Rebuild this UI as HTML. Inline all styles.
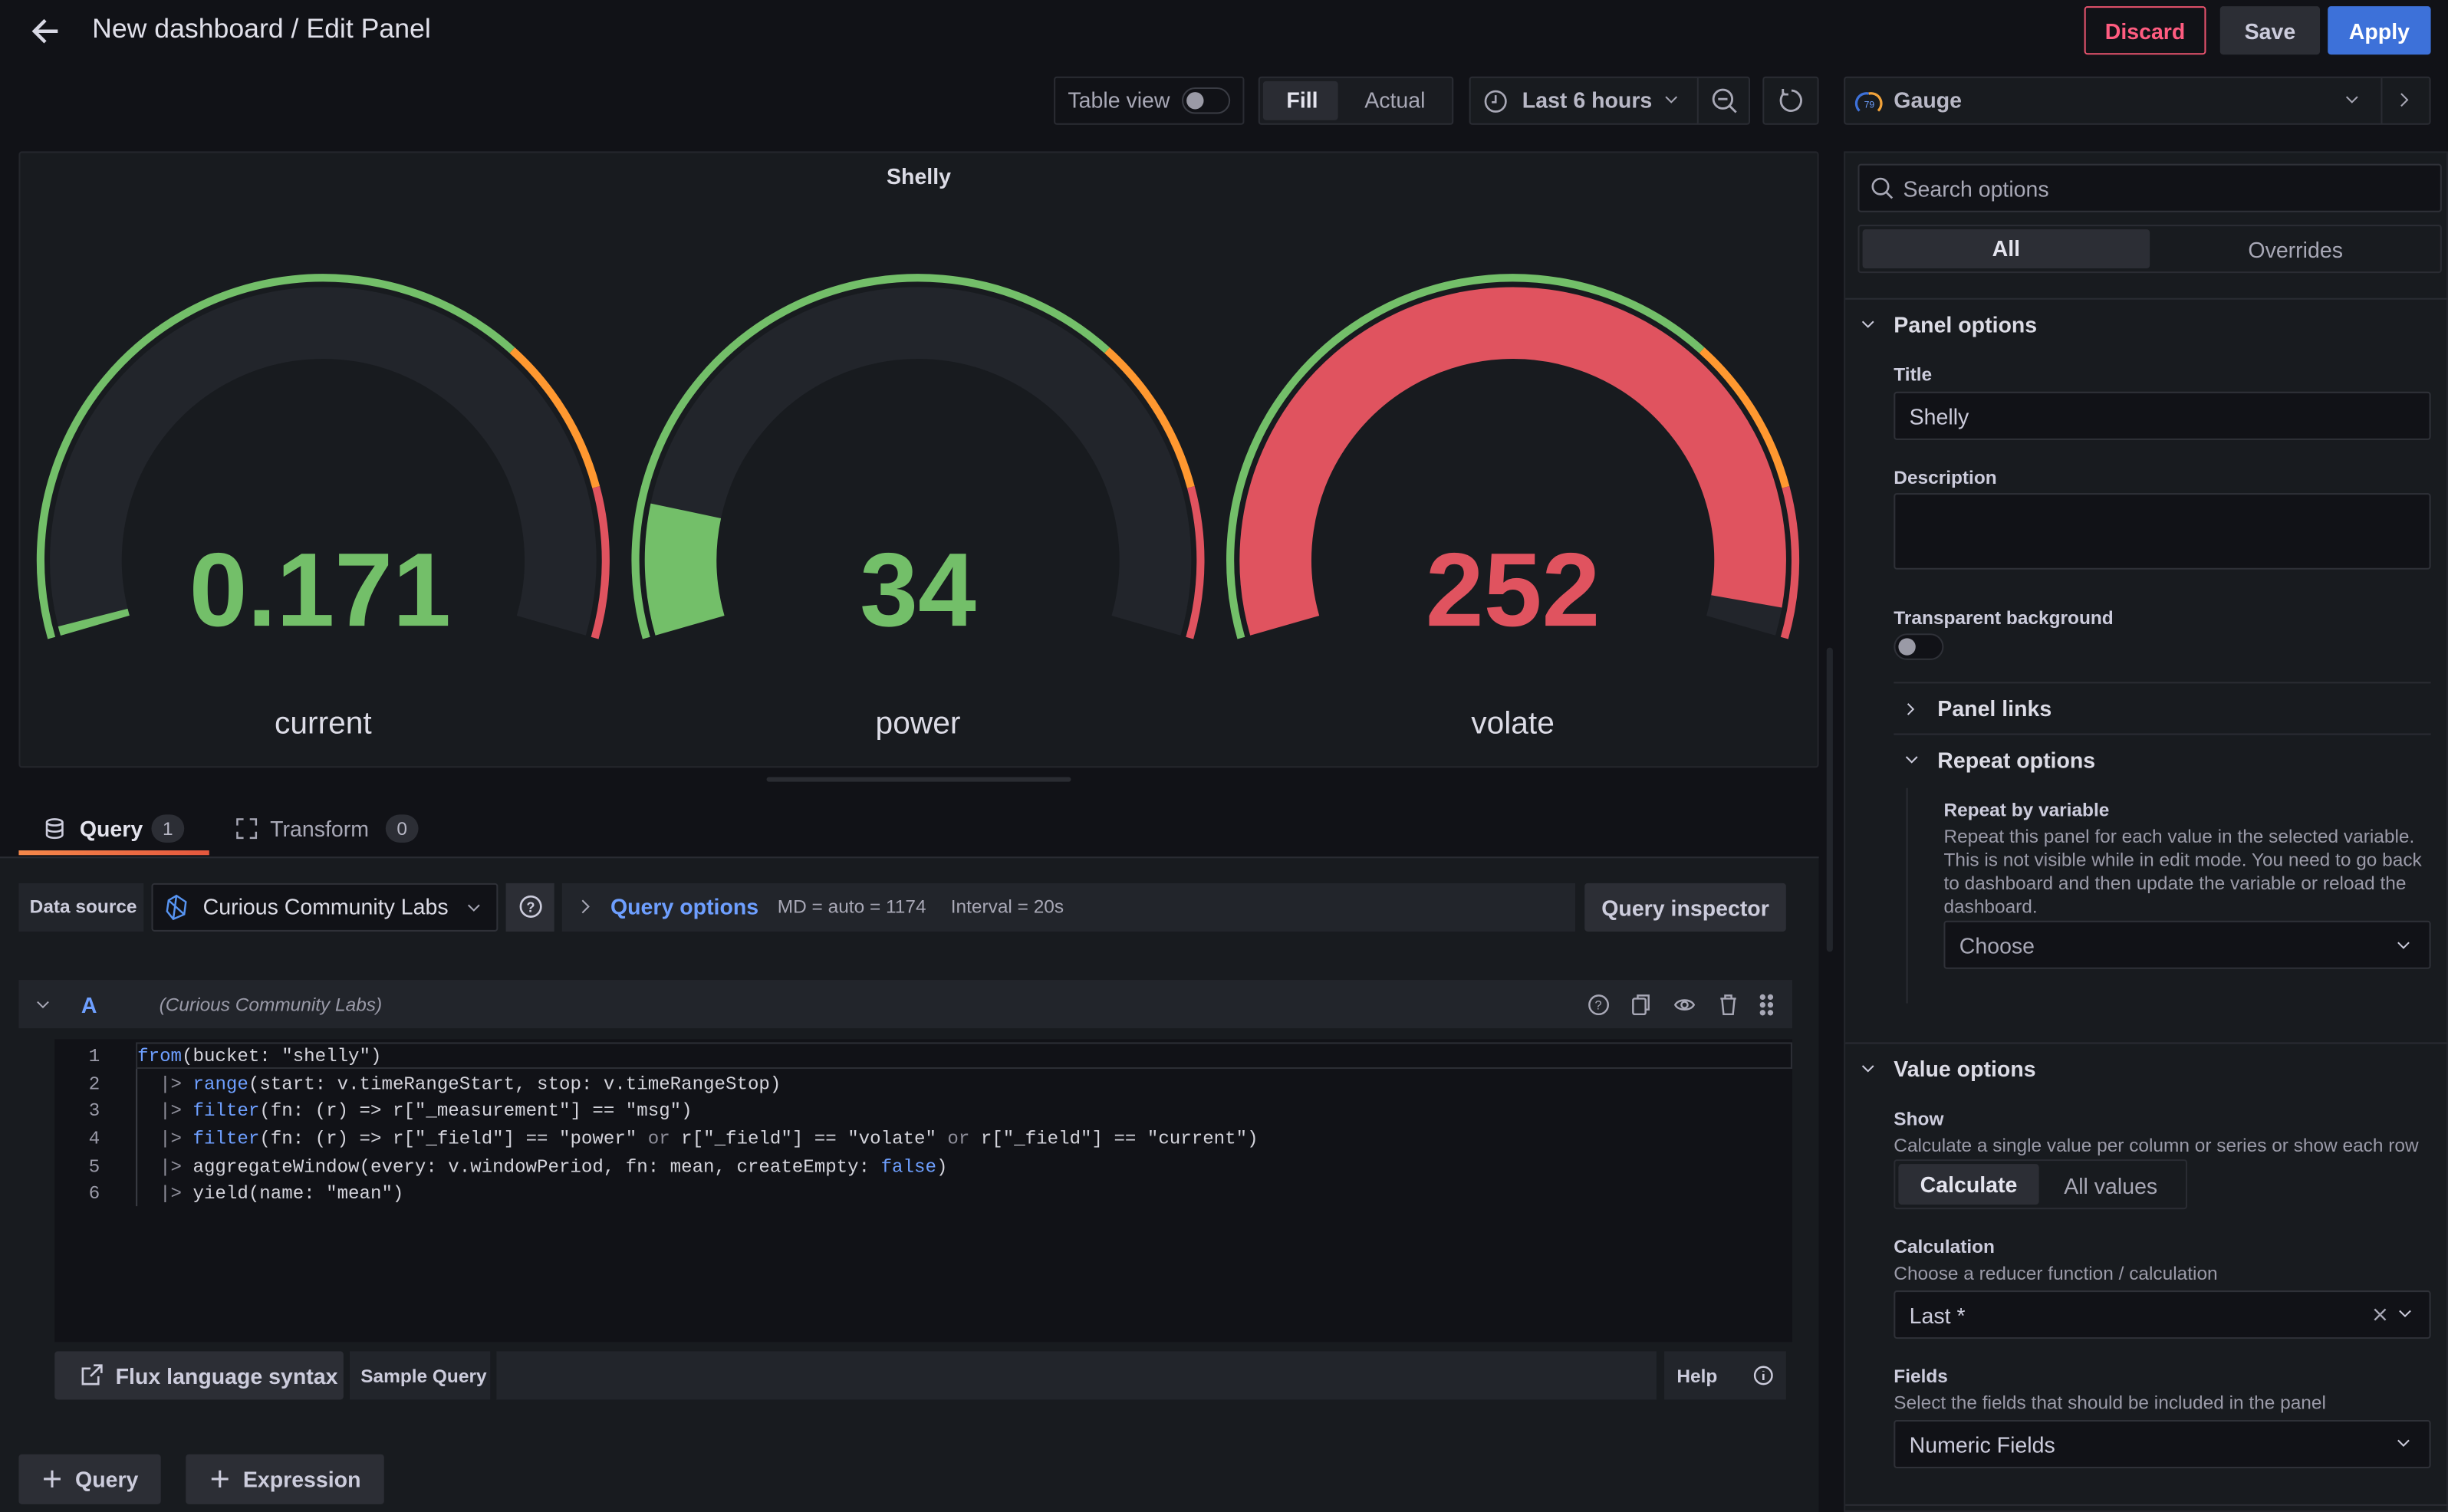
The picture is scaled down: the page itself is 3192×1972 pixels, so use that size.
<!DOCTYPE html>
<html><head><meta charset="utf-8"><style>
*{box-sizing:border-box;margin:0;padding:0}
html,body{width:3192px;height:1972px;overflow:hidden;background:#111217}
#r{position:absolute;left:0;top:0;width:1568px;height:969px;transform:scale(2.0357,2.0351);transform-origin:0 0;background:#111217;font-family:"Liberation Sans",sans-serif;color:#ccccdc;font-size:14px}
.a{position:absolute}
.t{position:absolute;white-space:nowrap;line-height:1}
.box{position:absolute;border:1px solid #2a2c33;border-radius:2px}
.btn{position:absolute;background:#2c2e35;border-radius:2px;display:flex;align-items:center;justify-content:center;font-weight:bold;font-size:14px;color:#ccccdc}
.lbl{position:absolute;font-size:12px;font-weight:bold;color:#ccccdc;white-space:nowrap}
.desc{position:absolute;font-size:12px;color:#9a9aa8;white-space:nowrap}
.inp{position:absolute;background:#111217;border:1px solid #2f3138;border-radius:2px;display:flex;align-items:center;padding-left:9px;font-size:14px}
.hr{position:absolute;height:1px;background:#2a2c33}
.code{position:absolute;left:88px;font-family:"Liberation Mono",monospace;font-size:11.85px;white-space:pre;color:#d4d4dc}
.ln{position:absolute;left:50px;width:14px;text-align:right;font-family:"Liberation Mono",monospace;font-size:12px;color:#9a9aa8}
.k{color:#6e9fff}.g{color:#8e8e9a}
svg{position:absolute;overflow:visible}
</style></head><body><div id="r">

<svg style="left:19px;top:10px" width="20" height="20" viewBox="0 0 20 20"><path d="M18 10H3M10 3L3 10l7 7" stroke="#d8d8e4" stroke-width="2.2" fill="none"/></svg>
<div class="t" style="left:59px;top:10px;font-size:17.5px;color:#e0e0ea">New dashboard / Edit Panel</div>
<div class="a" style="left:1335px;top:4px;width:78px;height:31px;border:1px solid #e8536e;border-radius:2px;color:#ff5c80;font-weight:bold;display:flex;align-items:center;justify-content:center">Discard</div>
<div class="btn" style="left:1422px;top:4px;width:64px;height:31px">Save</div>
<div class="btn" style="left:1491px;top:4px;width:66px;height:31px;background:#3d71d9;color:#fff">Apply</div>

<div class="box" style="left:675px;top:49px;width:122px;height:31px"></div>
<div class="t" style="left:684px;top:57px;color:#a8a8b6">Table view</div>
<div class="a" style="left:757px;top:56px;width:31px;height:17px;border:1px solid #3a3c44;border-radius:9px"></div>
<div class="a" style="left:760px;top:59px;width:11px;height:11px;border-radius:50%;background:#9a9aa6"></div>
<div class="box" style="left:806px;top:49px;width:125px;height:31px;background:#1a1c21"></div>
<div class="a" style="left:809px;top:52px;width:48px;height:25px;background:#2a2c33;border-radius:2px"></div>
<div class="t" style="left:824px;top:57px;font-weight:bold;color:#e4e4ee">Fill</div>
<div class="t" style="left:874px;top:57px;color:#a8a8b6">Actual</div>
<div class="box" style="left:941px;top:49px;width:180px;height:31px;background:#181b1f"></div>
<div class="a" style="left:1087px;top:50px;width:1px;height:29px;background:#2a2c33"></div>
<svg style="left:950px;top:57px" width="16" height="16" viewBox="0 0 16 16"><circle cx="8" cy="8" r="6.5" stroke="#a8a8b6" stroke-width="1.3" fill="none"/><path d="M8 4v4.5H5.5" stroke="#a8a8b6" stroke-width="1.3" fill="none"/></svg>
<div class="t" style="left:975px;top:57px;font-weight:bold;color:#b8b8c6">Last 6 hours</div>
<svg style="left:1066px;top:61px" width="9" height="6"><path d="M1 1l3.5 3.5L8 1" stroke="#a8a8b6" fill="none"/></svg>
<svg style="left:1096px;top:56px" width="17" height="17"><circle cx="7.5" cy="7.5" r="6" stroke="#a8a8b6" stroke-width="1.4" fill="none"/><path d="M4.5 7.5h6M12 12l4 4" stroke="#a8a8b6" stroke-width="1.4"/></svg>
<div class="box" style="left:1129px;top:49px;width:36px;height:31px;background:#181b1f"></div>
<svg style="left:1139px;top:56px" width="17" height="17"><path d="M4 3.5A6.5 6.5 0 1 0 8.5 2M3 1v3.5h3.5" stroke="#a8a8b6" stroke-width="1.4" fill="none"/></svg>
<div class="box" style="left:1181px;top:49px;width:376px;height:31px;background:#181b1f"></div>
<div class="a" style="left:1525px;top:50px;width:1px;height:29px;background:#2a2c33"></div>
<svg style="left:1189px;top:57px" width="16" height="16"><path d="M2 14A6.5 6.5 0 0 1 8 3" stroke="#3d71d9" stroke-width="1.6" fill="none"/><path d="M8 3a6.5 6.5 0 0 1 6 11" stroke="#f2a33a" stroke-width="1.6" fill="none"/><text x="5" y="12" font-size="6" fill="#6e9fff" font-family="Liberation Sans">79</text></svg>
<div class="t" style="left:1213px;top:57px;font-weight:bold;color:#b8b8c6">Gauge</div>
<svg style="left:1502px;top:61px" width="9" height="6"><path d="M1 1l3.5 3.5L8 1" stroke="#a8a8b6" fill="none"/></svg>
<svg style="left:1537px;top:59px" width="6" height="10"><path d="M1 1l4 4-4 4" stroke="#a8a8b6" fill="none"/></svg>

<div class="a" style="left:12px;top:97px;width:1153px;height:395px;background:#181b1f;border:1px solid #24262c;border-radius:2px"></div>
<div class="t" style="left:0;width:1177px;text-align:center;top:106px;font-size:14px;font-weight:bold;color:#dcdce6">Shelly</div>
<svg style="left:0;top:0" width="1177" height="500">
 <g transform="translate(207,359)">
  <path d="M-146.1 41.9A152 152 0 1 1 146.1 41.9" stroke="#22252b" stroke-width="46" fill="none"/>
  <path d="M-174 49.9A181 181 0 0 1 121.1 -134.5" stroke="#73bf69" stroke-width="5" fill="none"/>
  <path d="M121.1 -134.5A181 181 0 0 1 174.8 -46.8" stroke="#ff9830" stroke-width="5" fill="none"/>
  <path d="M174.8 -46.8A181 181 0 0 1 174 49.9" stroke="#e0535f" stroke-width="5" fill="none"/>
  <path d="M-146.1 41.9A152 152 0 0 1 -147.5 36.8" stroke="#73bf69" stroke-width="46" fill="none"/>
 </g>
 <g transform="translate(588,359)">
  <path d="M-146.1 41.9A152 152 0 1 1 146.1 41.9" stroke="#22252b" stroke-width="46" fill="none"/>
  <path d="M-174 49.9A181 181 0 0 1 121.1 -134.5" stroke="#73bf69" stroke-width="5" fill="none"/>
  <path d="M121.1 -134.5A181 181 0 0 1 174.8 -46.8" stroke="#ff9830" stroke-width="5" fill="none"/>
  <path d="M174.8 -46.8A181 181 0 0 1 174 49.9" stroke="#e0535f" stroke-width="5" fill="none"/>
  <path d="M-146.1 41.9A152 152 0 0 1 -148.7 -31.6" stroke="#73bf69" stroke-width="46" fill="none"/>
 </g>
 <g transform="translate(969,359)">
  <path d="M-146.1 41.9A152 152 0 1 1 146.1 41.9" stroke="#22252b" stroke-width="46" fill="none"/>
  <path d="M-174 49.9A181 181 0 0 1 121.1 -134.5" stroke="#73bf69" stroke-width="5" fill="none"/>
  <path d="M121.1 -134.5A181 181 0 0 1 174.8 -46.8" stroke="#ff9830" stroke-width="5" fill="none"/>
  <path d="M174.8 -46.8A181 181 0 0 1 174 49.9" stroke="#e0535f" stroke-width="5" fill="none"/>
  <path d="M-146.1 41.9A152 152 0 1 1 149.7 26.4" stroke="#e0535f" stroke-width="46" fill="none"/>
 </g>
 <g font-family="Liberation Sans" font-weight="bold" font-size="67" text-anchor="middle">
  <text x="205" y="401" fill="#73bf69">0.171</text>
  <text x="588" y="401" fill="#73bf69">34</text>
  <text x="969" y="401" fill="#e0535f">252</text>
 </g>
 <g font-family="Liberation Sans" font-size="20" text-anchor="middle" fill="#dcdce6">
  <text x="207" y="470">current</text><text x="588" y="470">power</text><text x="969" y="470">volate</text>
 </g>
</svg>
<div class="a" style="left:491px;top:498px;width:195px;height:3px;background:#2a2c32;border-radius:2px"></div>
<div class="a" style="left:1170px;top:415px;width:4px;height:195px;background:#22252b;border-radius:2px"></div>

<svg style="left:29px;top:524px" width="12" height="14"><ellipse cx="6" cy="3" rx="5" ry="2" stroke="#ccccdc" fill="none" stroke-width="1.3"/><path d="M1 3v8c0 1 2 2 5 2s5-1 5-2V3M1 7c0 1 2 2 5 2s5-1 5-2" stroke="#ccccdc" fill="none" stroke-width="1.3"/></svg>
<div class="t" style="left:51px;top:524px;font-weight:bold;color:#e4e4ee">Query</div>
<div class="a" style="left:97px;top:522px;width:21px;height:18px;border-radius:9px;background:#2c2e35;font-size:12px;text-align:center;line-height:18px;color:#b8b8c6">1</div>
<div class="a" style="left:12px;top:545px;width:122px;height:3px;background:linear-gradient(90deg,#f5884a,#e5573e)"></div>
<svg style="left:151px;top:524px" width="14" height="14"><path d="M1 5V1h4M13 9v4H9M9 1h4v4M5 13H1V9" stroke="#a8a8b6" fill="none" stroke-width="1.2"/></svg>
<div class="t" style="left:173px;top:524px;color:#a8a8b6">Transform</div>
<div class="a" style="left:247px;top:522px;width:21px;height:18px;border-radius:9px;background:#2c2e35;font-size:12px;text-align:center;line-height:18px;color:#b8b8c6">0</div>
<div class="a" style="left:0;top:549px;width:1165px;height:420px;background:#181b1f;border-top:1px solid #2a2c33"></div>

<div class="a" style="left:12px;top:566px;width:80px;height:31px;background:#22252b"></div>
<div class="t" style="left:19px;top:575px;font-size:12px;font-weight:bold">Data source</div>
<div class="inp" style="left:97px;top:566px;width:222px;height:31px"></div>
<svg style="left:105px;top:573px" width="16" height="17"><path d="M8 1L14 5 13 13 6 16 2 11 3 4Z M3 4l10 9M8 1L6 16" stroke="#5794f2" fill="none" stroke-width="1.2"/></svg>
<div class="t" style="left:130px;top:574px;color:#dcdce6">Curious Community Labs</div>
<svg style="left:299px;top:579px" width="9" height="6"><path d="M1 1l3.5 3.5L8 1" stroke="#a8a8b6" fill="none"/></svg>
<div class="a" style="left:324px;top:566px;width:31px;height:31px;background:#2c2e35"></div>
<svg style="left:332px;top:573px" width="16" height="16"><circle cx="8" cy="8" r="6.5" stroke="#ccccdc" fill="none" stroke-width="1.3"/><text x="5.2" y="11.5" font-size="9" font-family="Liberation Sans" fill="#ccccdc" font-weight="bold">?</text></svg>
<div class="a" style="left:360px;top:566px;width:649px;height:31px;background:#22252b"></div>
<svg style="left:372px;top:576px" width="6" height="10"><path d="M1 1l4 4-4 4" stroke="#a8a8b6" fill="none"/></svg>
<div class="t" style="left:391px;top:574px;font-weight:bold;color:#6e9fff">Query options</div>
<div class="t" style="left:498px;top:575px;font-size:12px;color:#a8a8b6">MD = auto = 1174</div>
<div class="t" style="left:609px;top:575px;font-size:12px;color:#a8a8b6">Interval = 20s</div>
<div class="btn" style="left:1015px;top:566px;width:129px;height:31px">Query inspector</div>

<div class="a" style="left:12px;top:628px;width:1136px;height:31px;background:#22252b"></div>
<svg style="left:23px;top:641px" width="9" height="6"><path d="M1 1l3.5 3.5L8 1" stroke="#a8a8b6" fill="none"/></svg>
<div class="t" style="left:52px;top:637px;font-weight:bold;color:#6e9fff">A</div>
<div class="t" style="left:102px;top:638px;font-size:12px;font-style:italic;color:#9a9aa8">(Curious Community Labs)</div>
<svg style="left:1017px;top:636px" width="122" height="16" fill="none" stroke="#a8a8b6" stroke-width="1.2">
 <circle cx="7" cy="8" r="6"/><text x="4.5" y="11" font-size="8" fill="#a8a8b6" stroke="none" font-family="Liberation Sans">?</text>
 <rect x="29" y="4" width="8" height="10" rx="1"/><path d="M32 4V2h7v9h-2"/>
 <path d="M56 8c2-4 10-4 12 0-2 4-10 4-12 0z"/><circle cx="62" cy="8" r="2"/>
 <path d="M85 4h10M88 4V2h4v2M86 4l1 10h6l1-10"/>
 <circle cx="112" cy="3" r="1.2" fill="#a8a8b6"/><circle cx="117" cy="3" r="1.2" fill="#a8a8b6"/><circle cx="112" cy="8" r="1.2" fill="#a8a8b6"/><circle cx="117" cy="8" r="1.2" fill="#a8a8b6"/><circle cx="112" cy="13" r="1.2" fill="#a8a8b6"/><circle cx="117" cy="13" r="1.2" fill="#a8a8b6"/>
</svg>

<div class="a" style="left:35px;top:666px;width:1113px;height:194px;background:#111217"></div>
<div class="a" style="left:87px;top:668px;width:1061px;height:17px;border:1px solid #2c2e35"></div>
<div class="a" style="left:87px;top:685px;width:1px;height:88px;background:#3a3c44"></div>
<div class="ln" style="top:670px">1</div><div class="code" style="top:670px"><span class="k">from</span>(bucket: "shelly")</div>
<div class="ln" style="top:688px">2</div><div class="code" style="top:688px">  <span class="g">|&gt;</span> <span class="k">range</span>(start: v.timeRangeStart, stop: v.timeRangeStop)</div>
<div class="ln" style="top:705px">3</div><div class="code" style="top:705px">  <span class="g">|&gt;</span> <span class="k">filter</span>(fn: (r) =&gt; r["_measurement"] == "msg")</div>
<div class="ln" style="top:723px">4</div><div class="code" style="top:723px">  <span class="g">|&gt;</span> <span class="k">filter</span>(fn: (r) =&gt; r["_field"] == "power" <span class="g">or</span> r["_field"] == "volate" <span class="g">or</span> r["_field"] == "current")</div>
<div class="ln" style="top:741px">5</div><div class="code" style="top:741px">  <span class="g">|&gt;</span> aggregateWindow(every: v.windowPeriod, fn: mean, createEmpty: <span class="k">false</span>)</div>
<div class="ln" style="top:758px">6</div><div class="code" style="top:758px">  <span class="g">|&gt;</span> yield(name: "mean")</div>

<div class="btn" style="left:35px;top:866px;width:185px;height:31px"></div>
<svg style="left:51px;top:874px" width="15" height="15" fill="none" stroke="#ccccdc" stroke-width="1.3"><path d="M7 3H2v10h10V8M9 1h5v5M14 1L7 8"/></svg>
<div class="t" style="left:74px;top:875px;font-weight:bold">Flux language syntax</div>
<div class="a" style="left:224px;top:866px;width:90px;height:31px;background:#22252b"></div>
<div class="t" style="left:231px;top:876px;font-size:12px;font-weight:bold">Sample Query</div>
<div class="a" style="left:318px;top:866px;width:743px;height:31px;background:#22252b"></div>
<div class="a" style="left:1066px;top:866px;width:78px;height:31px;background:#22252b"></div>
<div class="t" style="left:1074px;top:876px;font-size:12px;font-weight:bold">Help</div>
<svg style="left:1123px;top:875px" width="13" height="13"><circle cx="6.5" cy="6.5" r="5.5" stroke="#ccccdc" fill="none" stroke-width="1.2"/><path d="M6.5 5.5v4M6.5 3.5v.5" stroke="#ccccdc" stroke-width="1.3"/></svg>
<div class="btn" style="left:12px;top:932px;width:91px;height:32px">＋&nbsp;&nbsp;Query</div>
<div class="btn" style="left:119px;top:932px;width:127px;height:32px">＋&nbsp;&nbsp;Expression</div>

<div class="a" style="left:1181px;top:97px;width:387px;height:872px;background:#181b1f;border:1px solid #24262c"></div>
<div class="inp" style="left:1190px;top:105px;width:374px;height:31px;padding-left:28px;color:#a8a8b6">Search options</div>
<svg style="left:1198px;top:113px" width="15" height="15"><circle cx="6.5" cy="6.5" r="5" stroke="#a8a8b6" fill="none" stroke-width="1.3"/><path d="M10 10l4 4" stroke="#a8a8b6" stroke-width="1.3"/></svg>
<div class="box" style="left:1190px;top:144px;width:374px;height:31px"></div>
<div class="a" style="left:1193px;top:147px;width:184px;height:25px;background:#2c2e35;border-radius:2px;text-align:center;line-height:25px;font-weight:bold;color:#e4e4ee">All</div>
<div class="t" style="left:1440px;top:153px;color:#a8a8b6">Overrides</div>
<div class="hr" style="left:1182px;top:191px;width:386px"></div>
<svg style="left:1192px;top:205px" width="9" height="6"><path d="M1 1l3.5 3.5L8 1" stroke="#ccccdc" fill="none"/></svg>
<div class="t" style="left:1213px;top:201px;font-weight:bold;color:#dcdce6">Panel options</div>
<div class="lbl" style="left:1213px;top:233px">Title</div>
<div class="inp" style="left:1213px;top:251px;width:344px;height:31px">Shelly</div>
<div class="lbl" style="left:1213px;top:299px">Description</div>
<div class="inp" style="left:1213px;top:316px;width:344px;height:49px"></div>
<div class="lbl" style="left:1213px;top:389px">Transparent background</div>
<div class="a" style="left:1213px;top:406px;width:32px;height:17px;border:1px solid #2f3138;border-radius:9px;background:#111217"></div>
<div class="a" style="left:1216px;top:409px;width:11px;height:11px;border-radius:50%;background:#9a9aa6"></div>
<div class="hr" style="left:1213px;top:437px;width:344px"></div>
<svg style="left:1221px;top:450px" width="6" height="9"><path d="M1 1l3.5 3.5L1 8" stroke="#ccccdc" fill="none"/></svg>
<div class="t" style="left:1241px;top:447px;font-weight:bold;color:#dcdce6">Panel links</div>
<div class="hr" style="left:1213px;top:470px;width:344px"></div>
<svg style="left:1220px;top:484px" width="9" height="6"><path d="M1 1l3.5 3.5L8 1" stroke="#ccccdc" fill="none"/></svg>
<div class="t" style="left:1241px;top:480px;font-weight:bold;color:#dcdce6">Repeat options</div>
<div class="a" style="left:1221px;top:505px;width:1px;height:138px;background:#2a2c33"></div>
<div class="lbl" style="left:1245px;top:512px">Repeat by variable</div>
<div class="desc" style="left:1245px;top:529px;line-height:15px">Repeat this panel for each value in the selected variable.<br>This is not visible while in edit mode. You need to go back<br>to dashboard and then update the variable or reload the<br>dashboard.</div>
<div class="inp" style="left:1245px;top:590px;width:312px;height:31px;color:#a8a8b6">Choose</div>
<svg style="left:1535px;top:603px" width="9" height="6"><path d="M1 1l3.5 3.5L8 1" stroke="#ccccdc" fill="none"/></svg>
<div class="hr" style="left:1182px;top:668px;width:386px"></div>
<svg style="left:1192px;top:682px" width="9" height="6"><path d="M1 1l3.5 3.5L8 1" stroke="#ccccdc" fill="none"/></svg>
<div class="t" style="left:1213px;top:678px;font-weight:bold;color:#dcdce6">Value options</div>
<div class="lbl" style="left:1213px;top:710px">Show</div>
<div class="desc" style="left:1213px;top:727px">Calculate a single value per column or series or show each row</div>
<div class="box" style="left:1213px;top:743px;width:188px;height:32px"></div>
<div class="a" style="left:1216px;top:746px;width:90px;height:26px;background:#2c2e35;border-radius:2px;text-align:center;line-height:26px;font-weight:bold;color:#e4e4ee">Calculate</div>
<div class="t" style="left:1322px;top:753px;color:#a8a8b6">All values</div>
<div class="lbl" style="left:1213px;top:792px">Calculation</div>
<div class="desc" style="left:1213px;top:809px">Choose a reducer function / calculation</div>
<div class="inp" style="left:1213px;top:827px;width:344px;height:31px">Last *</div>
<svg style="left:1520px;top:838px" width="26" height="9"><path d="M1 1l7 7M8 1L1 8" stroke="#a8a8b6" stroke-width="1.2"/><path d="M17 2l3.5 3.5L24 2" stroke="#ccccdc" fill="none"/></svg>
<div class="lbl" style="left:1213px;top:875px">Fields</div>
<div class="desc" style="left:1213px;top:892px">Select the fields that should be included in the panel</div>
<div class="inp" style="left:1213px;top:910px;width:344px;height:31px">Numeric Fields</div>
<svg style="left:1535px;top:922px" width="9" height="6"><path d="M1 1l3.5 3.5L8 1" stroke="#ccccdc" fill="none"/></svg>
<div class="hr" style="left:1182px;top:964px;width:386px"></div>
</div></body></html>
